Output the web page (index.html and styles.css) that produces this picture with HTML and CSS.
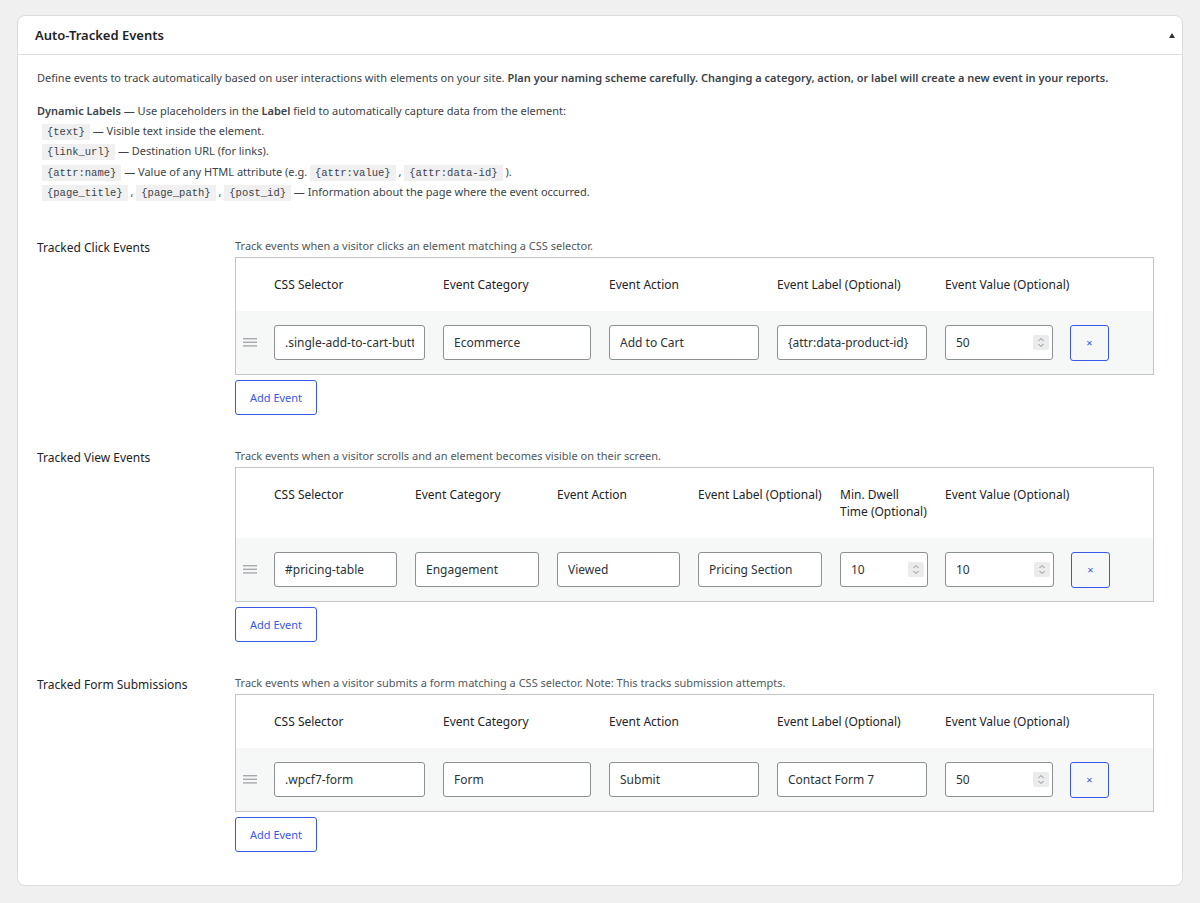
FILE: index.html
```html
<!DOCTYPE html>
<html lang="en">
<head>
    <meta charset="UTF-8">
    <meta name="viewport" content="width=device-width, initial-scale=1.0">
    <title>Auto-Tracked Events</title>
    <link rel="stylesheet" href="styles.css">
</head>
<body>
    <div class="postbox">
        <div class="postbox-header">
            <h2>Auto-Tracked Events</h2>
            <span class="toggle-arrow"></span>
        </div>

        <div class="inside">
            <p class="intro">Define events to track automatically based on user interactions with elements on your site. <strong>Plan your naming scheme carefully. Changing a category, action, or label will create a new event in your reports.</strong></p>

            <div class="dynamic-labels">
                <p><strong>Dynamic Labels</strong> — Use placeholders in the <strong>Label</strong> field to automatically capture data from the element:</p>
                <div class="ph-line"><code>{text}</code> — Visible text inside the element.</div>
                <div class="ph-line"><code>{link_url}</code> — Destination URL (for links).</div>
                <div class="ph-line"><code>{attr:name}</code> — Value of any HTML attribute (e.g. <code>{attr:value}</code> , <code>{attr:data-id}</code> ).</div>
                <div class="ph-line"><code>{page_title}</code> , <code>{page_path}</code> , <code>{post_id}</code> — Information about the page where the event occurred.</div>
            </div>

            <!-- Click events -->
            <div class="field-row first">
                <div class="field-label">Tracked Click Events</div>
                <div class="field-body">
                    <p class="description">Track events when a visitor clicks an element matching a CSS selector.</p>
                    <div class="events-table cols-5">
                        <div class="events-head">
                            <span></span>
                            <span>CSS Selector</span>
                            <span>Event Category</span>
                            <span>Event Action</span>
                            <span>Event Label (Optional)</span>
                            <span>Event Value (Optional)</span>
                            <span></span>
                        </div>
                        <div class="events-row">
                            <span class="drag-handle"><svg width="14" height="9" viewBox="0 0 14 9"><rect y="0" width="14" height="1.4"/><rect y="3.6" width="14" height="1.4"/><rect y="7.2" width="14" height="1.4"/></svg></span>
                            <span><input type="text" value=".single-add-to-cart-button"></span>
                            <span><input type="text" value="Ecommerce"></span>
                            <span><input type="text" value="Add to Cart"></span>
                            <span><input type="text" value="{attr:data-product-id}"></span>
                            <span class="num-field"><input type="number" value="50"><span class="spin"><svg width="16" height="15" viewBox="0 0 16 15"><path d="M5.5 6 L8 3.5 L10.5 6 M5.5 9 L8 11.5 L10.5 9"/></svg></span></span>
                            <span><button class="remove-row" type="button">×</button></span>
                        </div>
                    </div>
                    <button class="add-event" type="button">Add Event</button>
                </div>
            </div>

            <!-- View events -->
            <div class="field-row">
                <div class="field-label">Tracked View Events</div>
                <div class="field-body">
                    <p class="description">Track events when a visitor scrolls and an element becomes visible on their screen.</p>
                    <div class="events-table cols-6">
                        <div class="events-head">
                            <span></span>
                            <span>CSS Selector</span>
                            <span>Event Category</span>
                            <span>Event Action</span>
                            <span>Event Label (Optional)</span>
                            <span>Min. Dwell<br>Time (Optional)</span>
                            <span>Event Value (Optional)</span>
                            <span></span>
                        </div>
                        <div class="events-row">
                            <span class="drag-handle"><svg width="14" height="9" viewBox="0 0 14 9"><rect y="0" width="14" height="1.4"/><rect y="3.6" width="14" height="1.4"/><rect y="7.2" width="14" height="1.4"/></svg></span>
                            <span><input type="text" value="#pricing-table"></span>
                            <span><input type="text" value="Engagement"></span>
                            <span><input type="text" value="Viewed"></span>
                            <span><input type="text" value="Pricing Section"></span>
                            <span class="num-field"><input type="number" value="10"><span class="spin"><svg width="16" height="15" viewBox="0 0 16 15"><path d="M5.5 6 L8 3.5 L10.5 6 M5.5 9 L8 11.5 L10.5 9"/></svg></span></span>
                            <span class="num-field"><input type="number" value="10"><span class="spin"><svg width="16" height="15" viewBox="0 0 16 15"><path d="M5.5 6 L8 3.5 L10.5 6 M5.5 9 L8 11.5 L10.5 9"/></svg></span></span>
                            <span><button class="remove-row" type="button">×</button></span>
                        </div>
                    </div>
                    <button class="add-event" type="button">Add Event</button>
                </div>
            </div>

            <!-- Form submissions -->
            <div class="field-row">
                <div class="field-label">Tracked Form Submissions</div>
                <div class="field-body">
                    <p class="description">Track events when a visitor submits a form matching a CSS selector. Note: This tracks submission attempts.</p>
                    <div class="events-table cols-5">
                        <div class="events-head">
                            <span></span>
                            <span>CSS Selector</span>
                            <span>Event Category</span>
                            <span>Event Action</span>
                            <span>Event Label (Optional)</span>
                            <span>Event Value (Optional)</span>
                            <span></span>
                        </div>
                        <div class="events-row">
                            <span class="drag-handle"><svg width="14" height="9" viewBox="0 0 14 9"><rect y="0" width="14" height="1.4"/><rect y="3.6" width="14" height="1.4"/><rect y="7.2" width="14" height="1.4"/></svg></span>
                            <span><input type="text" value=".wpcf7-form"></span>
                            <span><input type="text" value="Form"></span>
                            <span><input type="text" value="Submit"></span>
                            <span><input type="text" value="Contact Form 7"></span>
                            <span class="num-field"><input type="number" value="50"><span class="spin"><svg width="16" height="15" viewBox="0 0 16 15"><path d="M5.5 6 L8 3.5 L10.5 6 M5.5 9 L8 11.5 L10.5 9"/></svg></span></span>
                            <span><button class="remove-row" type="button">×</button></span>
                        </div>
                    </div>
                    <button class="add-event" type="button">Add Event</button>
                </div>
            </div>
        </div>
    </div>
</body>
</html>
```

FILE: styles.css
```css
:root {
    --page-bg: #f0f0f1;
    --card-border: #dcdcde;
    --table-border: #c3c4c7;
    --input-border: #8c8f94;
    --text: #1d2327;
    --text-muted: #50575e;
    --accent: #3858e9;
    --row-bg: #f6f7f7;
}

* {
    box-sizing: border-box;
}

body {
    margin: 0;
    padding: 15px 17px;
    background: var(--page-bg);
    color: var(--text);
    font-family: "Segoe UI", "Noto Sans", sans-serif;
    font-size: 12px;
}

.postbox {
    background: #fff;
    border: 1px solid var(--card-border);
    border-radius: 8px;
}

.postbox-header {
    display: flex;
    align-items: center;
    justify-content: space-between;
    height: 39px;
    padding: 0 7px 0 17px;
    border-bottom: 1px solid var(--card-border);
}

.postbox-header h2 {
    margin: 0;
    font-size: 13px;
    font-weight: 600;
}

.toggle-arrow {
    width: 0;
    height: 0;
    border-left: 3.5px solid transparent;
    border-right: 3.5px solid transparent;
    border-bottom: 5px solid #2c3338;
}

.inside {
    padding: 13px 28px 33px 19px;
}

.intro {
    margin: 0 0 13px;
    font-size: 11px;
    line-height: 20px;
    color: #3c434a;
}

.intro strong,
.dynamic-labels strong {
    font-weight: 600;
}

.dynamic-labels {
    font-size: 11px;
    color: #3c434a;
}

.dynamic-labels p {
    margin: 0;
    line-height: 20px;
}

.ph-line {
    height: 20px;
    line-height: 20px;
    padding-left: 5px;
}

.ph-line + .ph-line {
    margin-top: 0.3px;
}

code {
    font-family: "Liberation Mono", monospace;
    font-size: 10.5px;
    line-height: 14px;
    background: #f0f0f1;
    color: #3c434a;
    padding: 2px 5px;
}

/* Settings rows */
.field-row {
    display: grid;
    grid-template-columns: 198px 1fr;
    margin-top: 32px;
}

.field-row.first {
    margin-top: 35px;
}

.field-label {
    padding-top: 2px;
    line-height: 18px;
}

.description {
    margin: 0 0 2px;
    font-size: 11px;
    line-height: 18px;
    color: var(--text-muted);
}

/* Repeater tables */
.events-table {
    border: 1px solid var(--table-border);
    background: #fff;
}

.events-head,
.events-row {
    display: grid;
}

.cols-5 .events-head,
.cols-5 .events-row {
    grid-template-columns: 38px 169px 166px 168px 168px 125px 1fr;
}

.cols-6 .events-head,
.cols-6 .events-row {
    grid-template-columns: 38px 141px 142px 141px 142px 105px 126px 1fr;
}

.events-head span {
    padding: 18px 0;
    line-height: 17px;
    white-space: nowrap;
    color: var(--text);
}

.events-row {
    align-items: center;
    padding: 14px 0 13px;
    background: var(--row-bg);
}

.drag-handle {
    display: flex;
    padding-left: 7px;
}

.drag-handle svg {
    fill: #a7aaad;
}

.events-row input {
    display: block;
    width: calc(100% - 18px);
    height: 35px;
    padding: 0 10px;
    border: 1px solid var(--input-border);
    border-radius: 3px;
    background: #fff;
    color: #2c3338;
    font-family: inherit;
    font-size: 12px;
}

.num-field {
    position: relative;
    width: calc(100% - 17px);
}

.num-field input {
    width: 100%;
    appearance: textfield;
    -moz-appearance: textfield;
}

.num-field input::-webkit-inner-spin-button,
.num-field input::-webkit-outer-spin-button {
    -webkit-appearance: none;
    margin: 0;
}

.spin {
    position: absolute;
    top: 10px;
    right: 4px;
    width: 16px;
    height: 15px;
    background: #ebebeb;
    border-radius: 2px;
}

.spin svg {
    display: block;
    fill: none;
    stroke: #8c8f94;
    stroke-width: 1;
}

.remove-row {
    display: block;
    width: 39px;
    height: 36px;
    border: 1px solid var(--accent);
    border-radius: 3px;
    background: transparent;
    color: var(--accent);
    font-family: inherit;
    font-size: 11px;
    cursor: pointer;
}

.add-event {
    display: block;
    margin-top: 5px;
    height: 35px;
    padding: 0 14px;
    border: 1px solid var(--accent);
    border-radius: 3px;
    background: #fff;
    color: var(--accent);
    font-family: inherit;
    font-size: 11px;
    cursor: pointer;
}
```
